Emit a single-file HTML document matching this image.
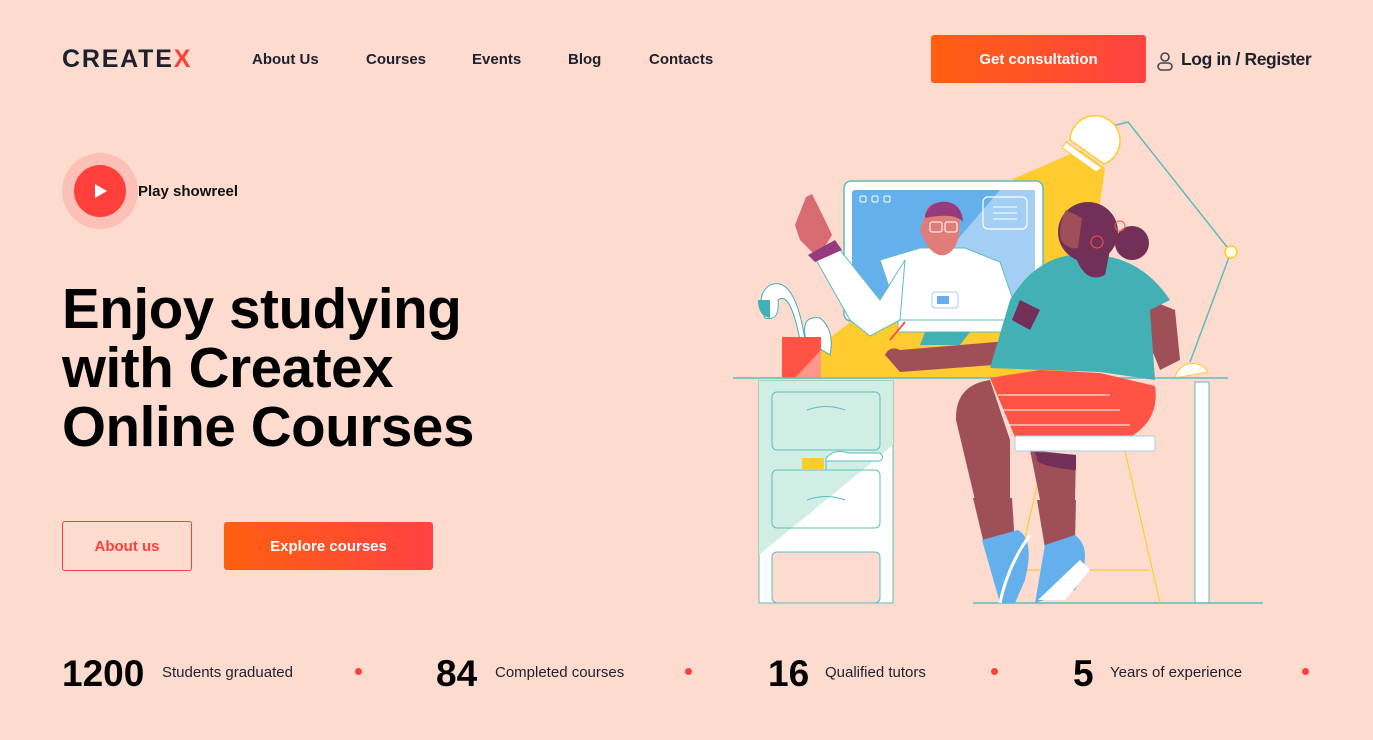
<!DOCTYPE html>
<html><head><meta charset="utf-8"><style>
*{margin:0;padding:0;box-sizing:border-box}
body{width:1373px;height:740px;background:#fddbcf;font-family:"Liberation Sans",sans-serif;color:#111;position:relative;overflow:hidden}
.a{position:absolute;white-space:nowrap}
.logo{left:62px;top:45px;font-size:25px;font-weight:bold;letter-spacing:1.8px;color:#1e212c}
.nav{top:51px;font-size:15px;font-weight:bold;color:#1e212c}
.btn{display:flex;align-items:center;justify-content:center;font-weight:bold;font-size:15px;color:#fff;background:linear-gradient(90deg,#ff5f0f,#ff4242);border-radius:3px}
h1{position:absolute;left:62px;top:279px;font-size:56.5px;line-height:59px;font-weight:bold;letter-spacing:-0.4px;color:#000}
.num{font-size:37px;font-weight:bold;top:653px;color:#000}
.lab{font-size:15px;top:664px;color:#1e212c}
.dot{width:7px;height:7px;border-radius:50%;background:#ff3f3a;top:668px}
</style></head><body>
<div class="a logo">CREATE<span style="color:#ff3f3a">X</span></div>
<div class="a nav" style="left:252px">About Us</div>
<div class="a nav" style="left:366px">Courses</div>
<div class="a nav" style="left:472px">Events</div>
<div class="a nav" style="left:568px">Blog</div>
<div class="a nav" style="left:649px">Contacts</div>
<div class="a btn" style="left:931px;top:35px;width:215px;height:48px">Get consultation</div>
<svg class="a" style="left:1156px;top:51px" width="18" height="20" viewBox="0 0 18 20"><circle cx="9" cy="6" r="4" fill="none" stroke="#424551" stroke-width="1.6"/><rect x="2" y="12" width="14" height="7" rx="3.5" fill="none" stroke="#424551" stroke-width="1.6"/></svg>
<div class="a" style="left:1181px;top:49px;font-size:17.5px;font-weight:bold;color:#1e212c;letter-spacing:-0.4px">Log in / Register</div>

<div class="a" style="left:62px;top:153px;width:76px;height:76px;border-radius:50%;background:#fdc0b6"></div>
<div class="a" style="left:74px;top:165px;width:52px;height:52px;border-radius:50%;background:#ff3f3a"></div>
<svg class="a" style="left:95px;top:184px" width="12" height="14"><path d="M0 0L12 7L0 14Z" fill="#fff"/></svg>
<div class="a" style="left:138px;top:183px;font-size:15px;font-weight:bold">Play showreel</div>

<h1>Enjoy studying<br>with Createx<br>Online Courses</h1>

<div class="a" style="left:62px;top:521px;width:130px;height:50px;border:1px solid #ff3f3a;border-radius:3px;color:#ff3f3a;font-weight:bold;font-size:15px;display:flex;align-items:center;justify-content:center">About us</div>
<div class="a btn" style="left:224px;top:522px;width:209px;height:48px">Explore courses</div>

<div class="a num" style="left:62px">1200</div><div class="a lab" style="left:162px">Students graduated</div><div class="a dot" style="left:355px"></div>
<div class="a num" style="left:436px">84</div><div class="a lab" style="left:495px">Completed courses</div><div class="a dot" style="left:685px"></div>
<div class="a num" style="left:768px">16</div><div class="a lab" style="left:825px">Qualified tutors</div><div class="a dot" style="left:991px"></div>
<div class="a num" style="left:1073px">5</div><div class="a lab" style="left:1110px">Years of experience</div><div class="a dot" style="left:1302px"></div>

<svg class="a" style="left:0;top:0" width="1373" height="740" viewBox="0 0 1373 740">
<path d="M1015 178L1080 150L1105 168L1075 378L820 378L820 345L880 300Z" fill="#fecc2f"/>
<path d="M1105 128L1128 122L1231 252L1190 362" fill="none" stroke="#5fbcbc" stroke-width="1.5"/>
<circle cx="1231" cy="252" r="6" fill="#fffbe0" stroke="#fecc2f" stroke-width="1.5"/>
<path d="M1070 140A25 25 0 1 1 1104 164Z" fill="#fff" stroke="#fecc2f" stroke-width="1.5"/>
<path d="M1066 142L1102 168L1096 172L1062 148Z" fill="#fff" stroke="#fecc2f" stroke-width="1.2"/>
<path d="M1175 378A18 18 0 0 1 1208 372Z" fill="#fff" stroke="#fecc2f"/>
<rect x="844" y="181" width="199" height="140" rx="7" fill="#fff" stroke="#5fbcbc" stroke-width="1.5"/>
<rect x="852" y="190" width="183" height="128" rx="3" fill="#64b0ec"/>
<path d="M1000 190L1035 190L1035 318L890 318Z" fill="#a3cff5"/>
<rect x="983" y="197" width="44" height="32" rx="5" fill="none" stroke="#fff" stroke-width="1.2"/>
<path d="M993 207h24M993 213h24M993 219h24" stroke="#fff"/>
<rect x="860" y="196" width="6" height="6" rx="1.5" fill="none" stroke="#fff"/><rect x="872" y="196" width="6" height="6" rx="1.5" fill="none" stroke="#fff"/><rect x="884" y="196" width="6" height="6" rx="1.5" fill="none" stroke="#fff"/>
<rect x="898" y="318" width="120" height="14" fill="#fff" stroke="#5fbcbc"/>
<path d="M925 332L970 332L960 345L920 345Z" fill="#42b0b4"/>
<path d="M880 260L920 248L965 248L1000 262L1020 320L900 320Z" fill="#fff" stroke="#5fbcbc"/>
<path d="M815 258L840 250L880 300L905 260L900 320L870 336L850 320Z" fill="#fff" stroke="#5fbcbc"/>
<path d="M920 230Q930 258 945 255Q960 250 960 222L958 208Q945 200 928 206Z" fill="#e17d79"/>
<path d="M925 215Q930 200 948 202Q962 205 963 222Q955 212 925 218Z" fill="#973b7e"/>
<rect x="930" y="222" width="12" height="10" rx="2" fill="none" stroke="#fff"/><rect x="945" y="222" width="12" height="10" rx="2" fill="none" stroke="#fff"/>
<rect x="932" y="292" width="26" height="16" rx="3" fill="#fff" stroke="#a3cff5"/><rect x="937" y="296" width="12" height="8" fill="#64b0ec"/>
<path d="M806 197L812 194L825 220L832 235L818 258L800 240L795 225Z" fill="#d86a72"/>
<path d="M808 255L835 240L842 250L815 262Z" fill="#973b7e"/>
<path d="M770 285Q755 295 765 318Q780 322 778 300Q790 290 800 340L805 340Q795 275 770 285Z" fill="#fff" stroke="#42b0b4"/>
<path d="M758 300Q758 316 770 318L770 300Z" fill="#42b0b4"/>
<path d="M806 340Q800 315 820 318Q835 330 830 355Z" fill="#fff" stroke="#42b0b4"/>
<rect x="782" y="337" width="39" height="41" fill="#ff5345"/>
<path d="M795 378L821 350L821 378Z" fill="#ff978a"/>
<path d="M733 378H1228" stroke="#5fbcbc" stroke-width="1.5"/>
<rect x="759" y="381" width="134" height="222" fill="#fff" stroke="#5fbcbc"/>
<path d="M759 381H893V445L759 555Z" fill="#d0eee3"/>
<rect x="772" y="392" width="108" height="58" rx="5" fill="#d0eee3" stroke="#5fbcbc"/>
<rect x="772" y="470" width="108" height="58" rx="5" fill="none" stroke="#5fbcbc"/>
<path d="M807 410Q826 403 845 410M807 500Q826 493 845 500" fill="none" stroke="#5fbcbc"/>
<rect x="802" y="458" width="22" height="12" fill="#fecc2f"/>
<path d="M826 470V458Q835 448 848 453H880Q885 458 880 461H826" fill="#fff" stroke="#5fbcbc"/>
<rect x="772" y="552" width="108" height="51" rx="5" fill="#fddbcf" stroke="#5fbcbc"/>
<rect x="1195" y="382" width="14" height="221" fill="#fff" stroke="#5fbcbc"/>
<path d="M973 603H1263" stroke="#5fbcbc" stroke-width="1.5"/>
<path d="M1045 451L1010 603M1125 451L1160 603M1020 570H1150" stroke="#fecc2f" stroke-width="1.2"/>
<path d="M885 355Q890 345 900 350L1020 340L1050 290L1080 300L1060 360L900 372Z" fill="#9e4f58"/>
<path d="M890 340L905 322" stroke="#ff5345" stroke-width="2"/>
<path d="M1150 300L1175 310L1180 360L1160 370L1148 340Z" fill="#9e4f58"/>
<path d="M1010 300Q1040 250 1090 255Q1140 255 1170 300L1150 310L1155 380L1100 372L990 368Z" fill="#42b0b4"/>
<path d="M1020 300L1040 310L1030 330L1012 320Z" fill="#722f57"/>
<path d="M990 378L1040 370L1100 373L1155 386Q1160 420 1130 437L1015 437Z" fill="#ff5345"/>
<path d="M998 395H1110M1003 410H1120M1008 425H1130" stroke="#fff" stroke-width="1"/>
<path d="M990 380Q955 385 956 420L975 500L1010 500L1010 440Z" fill="#9e4f58"/>
<path d="M1030 450L1040 500L1075 500L1076 455Z" fill="#9e4f58"/>
<path d="M1035 452L1076 455V470Q1050 468 1038 462Z" fill="#722f57"/>
<path d="M973 498L1012 498L1015 545L985 548Z" fill="#9e4f58"/>
<path d="M1037 500L1076 500L1075 540L1045 548Z" fill="#9e4f58"/>
<path d="M982 540L1018 530Q1035 540 1025 580L1015 603L1000 603Z" fill="#64b0ec"/>
<path d="M1000 603Q1008 565 1030 535" stroke="#fff" stroke-width="3" fill="none"/>
<path d="M1045 545L1075 535Q1095 550 1075 590L1035 603Z" fill="#64b0ec"/>
<path d="M1038 600L1080 560L1090 570L1065 600Z" fill="#fff"/>
<rect x="1015" y="436" width="140" height="15" rx="2" fill="#fff" stroke="#a3cff5"/>
<circle cx="1088" cy="232" r="30" fill="#722f57"/>
<path d="M1075 255Q1085 285 1105 275L1110 250Z" fill="#722f57"/>
<circle cx="1132" cy="243" r="17" fill="#722f57"/>
<path d="M1066 210Q1058 225 1061 240Q1068 250 1078 248L1082 218Z" fill="#9e4f58"/>
<circle cx="1097" cy="242" r="6" fill="none" stroke="#ff5345"/><circle cx="1120" cy="226" r="5" fill="none" stroke="#ff5345"/>
</svg>
</body></html>
